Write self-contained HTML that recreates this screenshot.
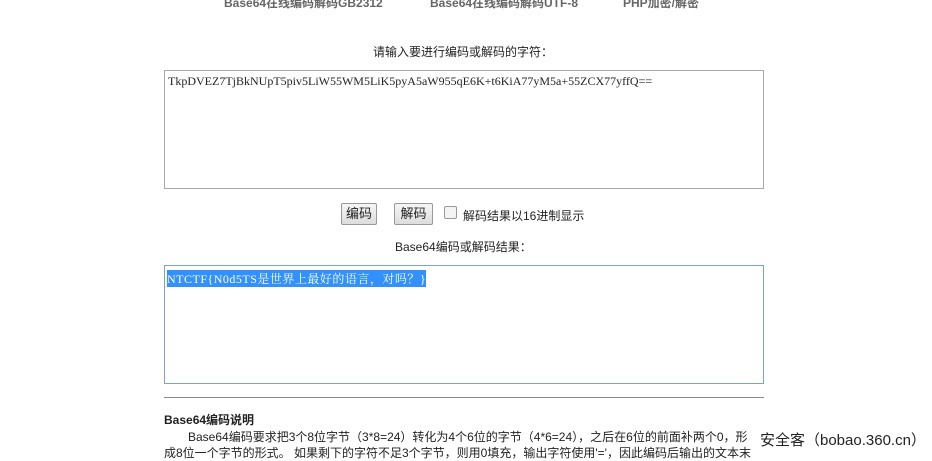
<!DOCTYPE html>
<html><head><meta charset="utf-8"><style>
body{margin:0;width:932px;height:457px;background:#fff;position:relative;overflow:hidden;font-family:"Liberation Sans","Noto Sans CJK SC",sans-serif;font-size:12px;color:#222}
.a{position:absolute}
.nav{top:-6px;font-weight:bold;font-size:12px;color:#666}
.ta{border:1px solid #aaa;background:#fff;box-sizing:border-box}
.mono{font-family:"Liberation Serif","Noto Serif CJK SC",serif;font-size:12px}
.btn{top:203px;height:22px;border:1px solid #999;background:linear-gradient(#f6f6f6,#ddd);border-radius:2px;box-sizing:border-box;font-size:13px;text-align:center;line-height:20px}
</style></head><body>
<div class="a nav" style="left:224px">Base64在线编码解码GB2312</div>
<div class="a nav" style="left:430px">Base64在线编码解码UTF-8</div>
<div class="a nav" style="left:623px">PHP加密/解密</div>
<div class="a" style="left:373px;top:43px">请输入要进行编码或解码的字符：</div>
<div class="a ta" style="left:164px;top:70px;width:600px;height:119px"><div class="mono" style="margin:3px 0 0 3px">TkpDVEZ7TjBkNUpT5piv5LiW55WM5LiK5pyA5aW955qE6K+t6KiA77yM5a+55ZCX77yffQ==</div></div>
<div class="a btn" style="left:341px;width:36px">编码</div>
<div class="a btn" style="left:394px;width:39px">解码</div>
<div class="a" style="left:444px;top:206px;width:11px;height:11px;border:1px solid #999;border-radius:2px;background:#f4f4f4"></div>
<div class="a" style="left:463px;top:207px">解码结果以16进制显示</div>
<div class="a" style="left:395px;top:238px">Base64编码或解码结果：</div>
<div class="a ta" style="left:164px;top:265px;width:600px;height:119px;border-color:#7aa0dd"><div class="mono" style="margin:4px 0 0 2px;display:inline-block;background:#3390ff;color:#fff;letter-spacing:0.5px">NTCTF{N0d5TS是世界上最好的语言，对吗？}</div></div>
<div class="a" style="left:164px;top:397px;width:600px;height:1px;background:#888"></div>
<div class="a" style="left:164px;top:411px;font-weight:bold">Base64编码说明</div>
<div class="a" style="left:188px;top:428px;white-space:nowrap">Base64编码要求把3个8位字节（3*8=24）转化为4个6位的字节（4*6=24），之后在6位的前面补两个0，形</div>
<div class="a" style="left:164px;top:444px;white-space:nowrap">成8位一个字节的形式。 如果剩下的字符不足3个字节，则用0填充，输出字符使用'='，因此编码后输出的文本末</div>
<div class="a" style="left:760px;top:429px;font-size:15px;color:#222;white-space:nowrap;background:#fff">安全客（bobao.360.cn）</div>
</body></html>
